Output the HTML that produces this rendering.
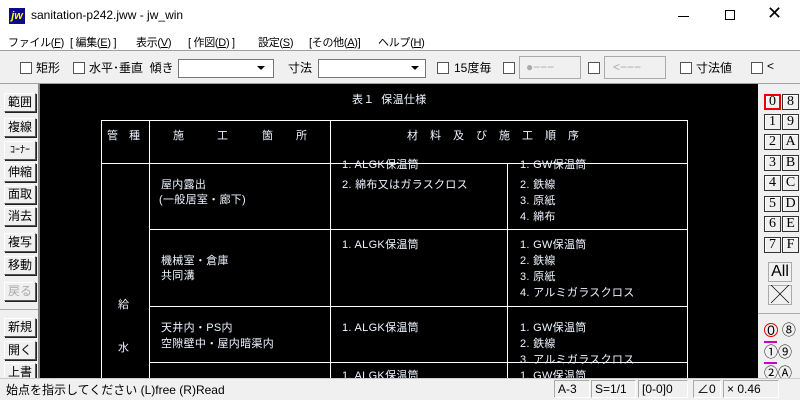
<!DOCTYPE html><html><head><meta charset="utf-8"><style>
*{margin:0;padding:0;box-sizing:border-box}
body{width:800px;height:400px;overflow:hidden;background:#f0f0f0;font-family:"Liberation Sans","Noto Sans CJK JP",sans-serif;font-size:12px;color:#000;position:relative}
.a{position:absolute;white-space:nowrap}
.m{position:absolute;white-space:nowrap;top:34px;font-size:11px;letter-spacing:-0.3px}
.cb{position:absolute;width:12px;height:12px;border:1px solid #555;background:#fff}
.btn{position:absolute;left:4px;width:32px;height:19px;background:#f0f0f0;border:1px solid;border-color:#fff #555 #555 #fff;font-size:12px;line-height:17px;text-align:center;box-shadow:1px 1px 0 #222}
.t{position:absolute;color:#eef4ff;font-size:11px;white-space:nowrap;letter-spacing:0.3px;font-family:"Liberation Sans","Noto Sans CJK JP",sans-serif}
.hl{position:absolute;background:#fff;height:1px}
.vl{position:absolute;background:#fff;width:1px}
.rb{position:absolute;width:17px;height:16px;background:#f0f0f0;border:1px solid #333;font-family:"Liberation Serif",serif;font-size:14px;line-height:14px;text-align:center;box-shadow:inset 1px 1px 0 #fff}
.st{position:absolute;top:380px;height:18px;border:1px solid;border-color:#aaa #fff #fff #aaa;font-size:12px;line-height:16px;padding-left:3px}
</style></head><body>
<div class="a" style="left:0;top:0;width:800px;height:32px;background:#fff"></div>
<div class="a" style="left:9px;top:8px;width:16px;height:16px;background:#0a0a8a;color:#ff0;font:bold italic 11px 'Liberation Sans';line-height:16px;text-align:center">jw</div>
<div class="a" style="left:31px;top:8px;font-size:12px">sanitation-p242.jww - jw_win</div>
<div class="a" style="left:678px;top:16px;width:11px;height:1px;background:#000"></div>
<div class="a" style="left:725px;top:10px;width:10px;height:10px;border:1px solid #000"></div>
<div class="a" style="left:767px;top:3px;font-size:18px;font-weight:300">✕</div>
<div class="a" style="left:0;top:32px;width:800px;height:18px;background:#fff"></div>
<div class="m" style="left:8px">ファイル(<u>F</u>)</div>
<div class="m" style="left:70px">[ 編集(<u>E</u>) ]</div>
<div class="m" style="left:136px">表示(<u>V</u>)</div>
<div class="m" style="left:188px">[ 作図(<u>D</u>) ]</div>
<div class="m" style="left:258px">設定(<u>S</u>)</div>
<div class="m" style="left:309px">[その他(<u>A</u>)]</div>
<div class="m" style="left:378px">ヘルプ(<u>H</u>)</div>
<div class="a" style="left:0;top:50px;width:800px;height:1px;background:#a0a0a0"></div>
<div class="cb" style="left:20px;top:62px"></div><div class="a" style="left:36px;top:59px">矩形</div>
<div class="cb" style="left:73px;top:62px"></div><div class="a" style="left:89px;top:59px">水平･垂直&nbsp; 傾き</div>
<div class="a" style="left:178px;top:59px;width:96px;height:19px;background:#fff;border:1px solid #777"></div>
<div class="a" style="left:257px;top:66px;border-left:4px solid transparent;border-right:4px solid transparent;border-top:4px solid #000"></div>
<div class="a" style="left:288px;top:59px">寸法</div>
<div class="a" style="left:318px;top:59px;width:108px;height:19px;background:#fff;border:1px solid #777"></div>
<div class="a" style="left:411px;top:66px;border-left:4px solid transparent;border-right:4px solid transparent;border-top:4px solid #000"></div>
<div class="cb" style="left:437px;top:62px"></div><div class="a" style="left:454px;top:59px">15度毎</div>
<div class="cb" style="left:503px;top:62px"></div>
<div class="a" style="left:519px;top:56px;width:62px;height:23px;border:1px solid #aaa;background:#f0f0f0;color:#aaa;line-height:20px;padding-left:6px">●−−−</div>
<div class="cb" style="left:588px;top:62px"></div>
<div class="a" style="left:604px;top:56px;width:62px;height:23px;border:1px solid #aaa;background:#f0f0f0;color:#aaa;line-height:20px;padding-left:8px">&lt;−−−</div>
<div class="cb" style="left:680px;top:62px"></div><div class="a" style="left:696px;top:59px">寸法値</div>
<div class="cb" style="left:751px;top:62px"></div><div class="a" style="left:767px;top:59px">&lt;</div>
<div class="a" style="left:0;top:83px;width:800px;height:1px;background:#a0a0a0"></div>
<div class="a" style="left:38px;top:84px;width:2px;height:294px;background:#888"></div>
<div class="btn" style="top:93px">範囲</div>
<div class="btn" style="top:118px">複線</div>
<div class="btn" style="top:141px;font-size:10px">ｺｰﾅｰ</div>
<div class="btn" style="top:163px">伸縮</div>
<div class="btn" style="top:185px">面取</div>
<div class="btn" style="top:207px">消去</div>
<div class="btn" style="top:233px">複写</div>
<div class="btn" style="top:256px">移動</div>
<div class="btn" style="top:282px;color:#aaa">戻る</div>
<div class="a" style="left:0;top:309px;width:38px;height:1px;background:#aaa"></div>
<div class="btn" style="top:318px">新規</div>
<div class="btn" style="top:341px">開く</div>
<div class="btn" style="top:363px">上書</div>
<div class="a" style="left:40px;top:84px;width:718px;height:294px;background:#000;overflow:hidden">
<div style="position:absolute;left:-40px;top:-84px;width:800px;height:400px">
<div class="t" style="left:352px;top:91px">表１&nbsp; 保温仕様</div>
<div class="hl" style="left:101px;top:120px;width:587px"></div>
<div class="hl" style="left:101px;top:163px;width:587px"></div>
<div class="hl" style="left:149px;top:229px;width:539px"></div>
<div class="hl" style="left:149px;top:306px;width:539px"></div>
<div class="hl" style="left:149px;top:362px;width:539px"></div>
<div class="vl" style="left:101px;top:120px;height:270px"></div>
<div class="vl" style="left:149px;top:120px;height:270px"></div>
<div class="vl" style="left:330px;top:120px;height:270px"></div>
<div class="vl" style="left:507px;top:163px;height:227px"></div>
<div class="vl" style="left:687px;top:120px;height:270px"></div>
<div class="t" style="left:107px;top:127px">管</div><div class="t" style="left:129px;top:127px">種</div>
<div class="t" style="left:173px;top:127px">施</div><div class="t" style="left:217px;top:127px">工</div><div class="t" style="left:262px;top:127px">箇</div><div class="t" style="left:296px;top:127px">所</div>
<div class="t" style="left:407px;top:127px">材</div><div class="t" style="left:430px;top:127px">料</div><div class="t" style="left:453px;top:127px">及</div><div class="t" style="left:476px;top:127px">び</div><div class="t" style="left:499px;top:127px">施</div><div class="t" style="left:522px;top:127px">工</div><div class="t" style="left:545px;top:127px">順</div><div class="t" style="left:568px;top:127px">序</div>
<div class="t" style="left:161px;top:176px">屋内露出</div>
<div class="t" style="left:159px;top:191px">(一般居室・廊下)</div>
<div class="t" style="left:342px;top:156px">1. ALGK保温筒</div>
<div class="t" style="left:342px;top:176px">2. 綿布又はガラスクロス</div>
<div class="t" style="left:520px;top:156px">1. GW保温筒</div>
<div class="t" style="left:520px;top:176px">2. 鉄線</div>
<div class="t" style="left:520px;top:192px">3. 原紙</div>
<div class="t" style="left:520px;top:208px">4. 綿布</div>
<div class="t" style="left:161px;top:252px">機械室・倉庫</div>
<div class="t" style="left:161px;top:267px">共同溝</div>
<div class="t" style="left:342px;top:236px">1. ALGK保温筒</div>
<div class="t" style="left:520px;top:236px">1. GW保温筒</div>
<div class="t" style="left:520px;top:252px">2. 鉄線</div>
<div class="t" style="left:520px;top:268px">3. 原紙</div>
<div class="t" style="left:520px;top:284px">4. アルミガラスクロス</div>
<div class="t" style="left:161px;top:319px">天井内・PS内</div>
<div class="t" style="left:161px;top:335px">空隙壁中・屋内暗渠内</div>
<div class="t" style="left:342px;top:319px">1. ALGK保温筒</div>
<div class="t" style="left:520px;top:319px">1. GW保温筒</div>
<div class="t" style="left:520px;top:335px">2. 鉄線</div>
<div class="t" style="left:520px;top:351px">3. アルミガラスクロス</div>
<div class="t" style="left:342px;top:367px">1. ALGK保温筒</div>
<div class="t" style="left:520px;top:367px">1. GW保温筒</div>
<div class="t" style="left:118px;top:296px">給</div>
<div class="t" style="left:118px;top:339px">水</div>
</div></div>
<div class="a" style="left:758px;top:84px;width:42px;height:294px;background:#f0f0f0"></div>
<div class="rb" style="left:764px;top:94px;border:2px solid #e00;line-height:12px">0</div>
<div class="rb" style="left:782px;top:94px">8</div>
<div class="rb" style="left:764px;top:114px">1</div><div class="rb" style="left:782px;top:114px">9</div>
<div class="rb" style="left:764px;top:134px">2</div><div class="rb" style="left:782px;top:134px">A</div>
<div class="rb" style="left:764px;top:155px">3</div><div class="rb" style="left:782px;top:155px">B</div>
<div class="rb" style="left:764px;top:175px">4</div><div class="rb" style="left:782px;top:175px">C</div>
<div class="rb" style="left:764px;top:196px">5</div><div class="rb" style="left:782px;top:196px">D</div>
<div class="rb" style="left:764px;top:216px">6</div><div class="rb" style="left:782px;top:216px">E</div>
<div class="rb" style="left:764px;top:237px">7</div><div class="rb" style="left:782px;top:237px">F</div>
<div class="a" style="left:768px;top:262px;width:24px;height:20px;border:1px solid #aaa;font-size:16px;text-align:center;line-height:18px">All</div>
<div class="a" style="left:768px;top:285px;width:24px;height:20px;border:1px solid #aaa;font-size:18px;text-align:center;line-height:18px;font-weight:100">╳</div>
<div class="a" style="left:758px;top:313px;width:42px;height:1px;background:#aaa"></div>
<div class="a" style="left:764px;top:320px;font-size:14px"><span style="color:#000;border:1px solid #e00;border-radius:50%;display:inline-block;width:14px;height:14px;line-height:12px;text-align:center">0</span> ⑧</div>
<div class="a" style="left:764px;top:341px;width:13px;height:2px;background:#c0c"></div>
<div class="a" style="left:764px;top:342px;font-size:14px">①⑨</div>
<div class="a" style="left:764px;top:362px;width:13px;height:2px;background:#c0c"></div>
<div class="a" style="left:764px;top:363px;font-size:14px">②Ⓐ</div>
<div class="a" style="left:0;top:378px;width:800px;height:22px;background:#f0f0f0;border-top:1px solid #ccc"></div>
<div class="a" style="left:6px;top:381px;font-size:12px">始点を指示してください (L)free (R)Read</div>
<div class="st" style="left:554px;width:36px">A-3</div>
<div class="st" style="left:591px;width:45px">S=1/1</div>
<div class="st" style="left:638px;width:50px">[0-0]0</div>
<div class="st" style="left:693px;width:28px">∠0</div>
<div class="st" style="left:723px;width:56px">× 0.46</div>
</body></html>
